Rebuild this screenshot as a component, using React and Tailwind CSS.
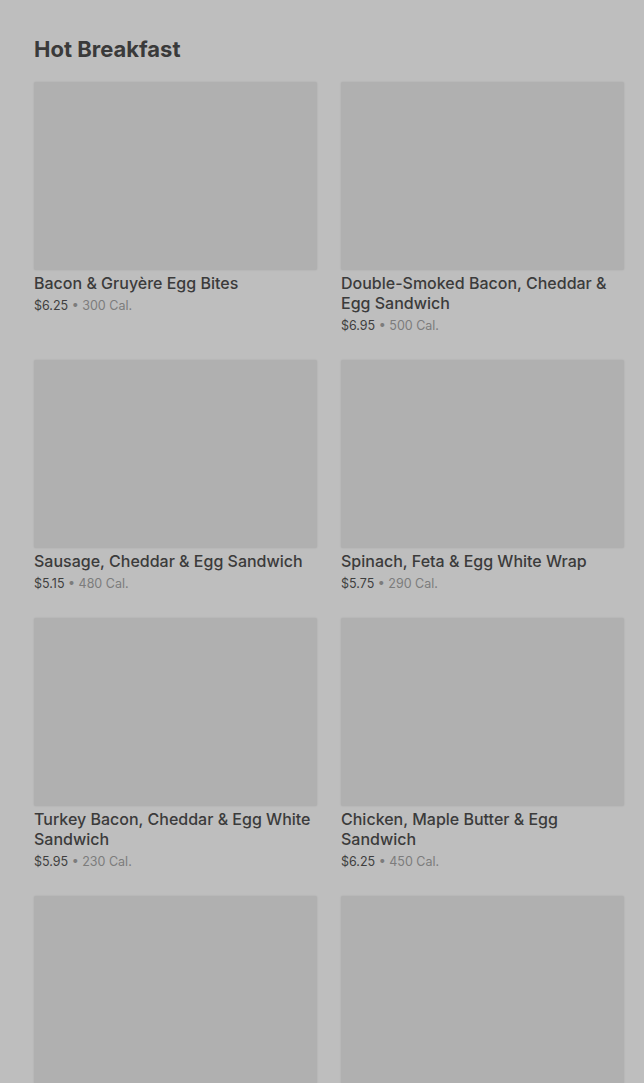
import React from 'react';

const items = [
  { name: 'Bacon & Gruyère Egg Bites', price: '$6.25', cal: '300 Cal.' },
  { name: 'Double-Smoked Bacon, Cheddar & Egg Sandwich', price: '$6.95', cal: '500 Cal.' },
  { name: 'Sausage, Cheddar & Egg Sandwich', price: '$5.15', cal: '480 Cal.' },
  { name: 'Spinach, Feta & Egg White Wrap', price: '$5.75', cal: '290 Cal.' },
  { name: 'Turkey Bacon, Cheddar & Egg White Sandwich', price: '$5.95', cal: '230 Cal.' },
  { name: 'Chicken, Maple Butter & Egg Sandwich', price: '$6.25', cal: '450 Cal.' },
  { name: null },
  { name: null },
];

const MenuCard = ({ item }) => (
  <div className="flex flex-col">
    <div className="h-[188px] w-full rounded-[2px] bg-[#b0b0b0] shadow-[0_0_2px_rgba(0,0,0,0.12)]" />
    {item.name && (
      <>
        <div className="mt-[3px] text-[16px] leading-[20px] font-medium text-[#3b3b3b]">{item.name}</div>
        <div className="mt-[3px] text-[12.5px] leading-[20px] text-[#3f3f3f]">
          {item.price}
          <span className="text-[#7c7c7c]"> • {item.cal}</span>
        </div>
      </>
    )}
  </div>
);

export default function App() {
  return (
    <div
      className="min-h-screen bg-[#bebebe] pl-[34px] pr-[20px] pt-[35px]"
      style={{ fontFamily: 'Inter, "Noto Sans", sans-serif' }}
    >
      <h2 className="text-[22px] leading-[28px] font-bold text-[#3a3a3a]">Hot Breakfast</h2>
      <div className="mt-[19px] grid grid-cols-2 gap-x-[24px] gap-y-[24px]">
        {items.map((item, i) => (
          <MenuCard key={i} item={item} />
        ))}
      </div>
    </div>
  );
}
